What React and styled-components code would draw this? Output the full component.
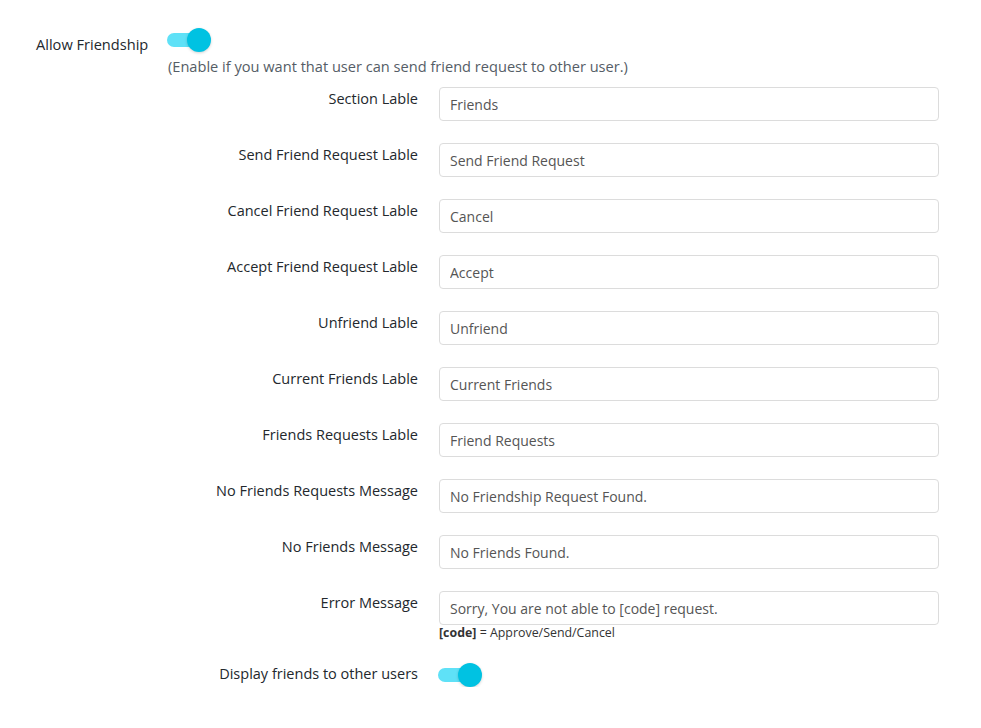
import styled, { createGlobalStyle } from 'styled-components';

const GlobalStyle = createGlobalStyle`
  body {
    margin: 0;
    background: #fff;
    font-family: 'Open Sans', 'Liberation Sans', sans-serif;
    font-size: 14px;
    color: #23282d;
  }
`;

const Page = styled.div`
  padding: 28px 0 0 36px;
  width: 945px;
`;

const TopRow = styled.div`
  display: flex;
  align-items: flex-start;
`;

const TopLabel = styled.div`
  width: 132px;
  font-size: 14.6px;
  line-height: 20px;
  padding-top: 6px;
`;

const TopControl = styled.div`
  display: flex;
  flex-direction: column;
  align-items: flex-start;
`;

const Hint = styled.div`
  color: #555d66;
  font-size: 14.6px;
  line-height: 20px;
  margin-top: 4px;
`;

const Fields = styled.div`
  display: grid;
  grid-template-columns: 382px 500px;
  column-gap: 21px;
  row-gap: 22px;
  margin-top: 11px;
`;

const Label = styled.label`
  text-align: right;
  font-size: 14.5px;
  line-height: 20px;
  padding-top: ${({ $toggle }) => ($toggle ? '1px' : '2px')};
`;

const InputCell = styled.div`
  display: flex;
  flex-direction: column;
`;

const TextInput = styled.input`
  box-sizing: border-box;
  width: 500px;
  height: 34px;
  border: 1px solid #dcdcdc;
  border-radius: 4px;
  padding: 0 10px;
  font-family: inherit;
  font-size: 14px;
  color: #555;
  background: #fff;
  outline: none;
`;

const Note = styled.div`
  font-size: 12.4px;
  line-height: 16px;
  color: #333;

  b {
    font-weight: 700;
  }
`;

const Switch = styled.div`
  position: relative;
  width: 44px;
  height: 24px;
  margin-left: -1px;
  flex-shrink: 0;
`;

const Track = styled.span`
  position: absolute;
  left: 0;
  top: 5px;
  width: 36px;
  height: 14px;
  border-radius: 7px;
  background: #5fe1f7;
`;

const Thumb = styled.span`
  position: absolute;
  right: 0;
  top: 0;
  width: 24px;
  height: 24px;
  border-radius: 50%;
  background: #00c2e2;
  box-shadow: 0 1px 3px rgba(0, 0, 0, 0.18);
`;

const Toggle = () => (
  <Switch>
    <Track />
    <Thumb />
  </Switch>
);

const fields = [
  ['Section Lable', 'Friends'],
  ['Send Friend Request Lable', 'Send Friend Request'],
  ['Cancel Friend Request Lable', 'Cancel'],
  ['Accept Friend Request Lable', 'Accept'],
  ['Unfriend Lable', 'Unfriend'],
  ['Current Friends Lable', 'Current Friends'],
  ['Friends Requests Lable', 'Friend Requests'],
  ['No Friends Requests Message', 'No Friendship Request Found.'],
  ['No Friends Message', 'No Friends Found.'],
];

export default function App() {
  return (
    <>
      <GlobalStyle />
      <Page>
        <TopRow>
          <TopLabel>Allow Friendship</TopLabel>
          <TopControl>
            <Toggle />
            <Hint>(Enable if you want that user can send friend request to other user.)</Hint>
          </TopControl>
        </TopRow>
        <Fields>
          {fields.map(([label, value]) => (
            <>
              <Label key={`l-${label}`}>{label}</Label>
              <InputCell key={`i-${label}`}>
                <TextInput defaultValue={value} />
              </InputCell>
            </>
          ))}
          <Label>Error Message</Label>
          <InputCell>
            <TextInput defaultValue="Sorry, You are not able to [code] request." />
            <Note>
              <b>[code]</b> = Approve/Send/Cancel
            </Note>
          </InputCell>
          <Label $toggle>Display friends to other users</Label>
          <InputCell>
            <Toggle />
          </InputCell>
        </Fields>
      </Page>
    </>
  );
}
